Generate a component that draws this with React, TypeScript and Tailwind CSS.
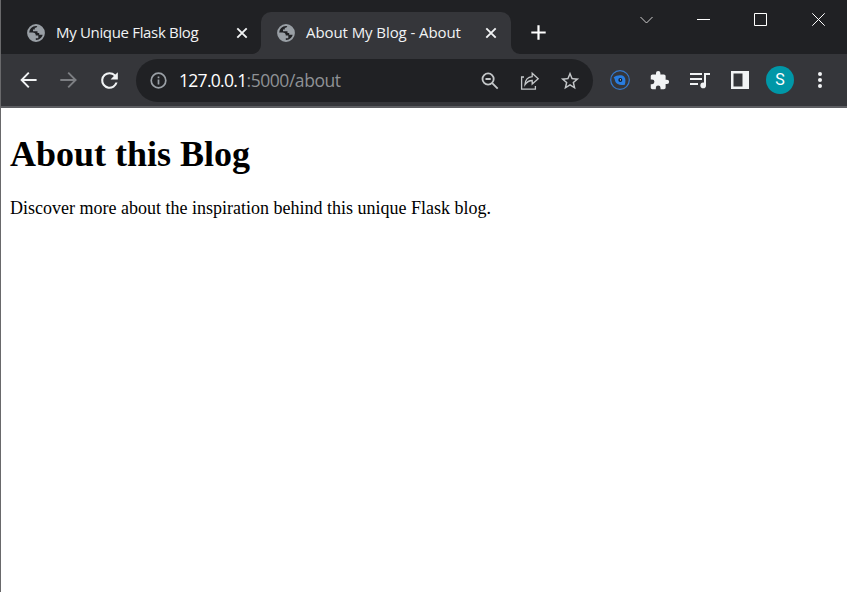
import type { ReactNode } from "react";

function Globe() {
  return (
    <svg width="18" height="18" viewBox="0 0 18 18" className="shrink-0">
      <circle cx="9" cy="9" r="7.9" fill="#202124" stroke="#9aa0a6" strokeWidth="2" />
      <path
        fill="#9aa0a6"
        d="M10.3 1.4C10.4 3 9.5 3.7 7.8 3.8V5.5H6V7.2H10.5V9H12.2V10.8H16.5A8 8 0 0 0 10.3 1.4ZM1.2 8.6H5.6C7.7 8.6 8.8 9.6 8.8 11.6H11.3V14.2H8.8V16.8A8 8 0 0 1 1.2 8.6Z"
      />
    </svg>
  );
}

function Cross() {
  return (
    <svg width="12" height="12" viewBox="0 0 12 12" className="shrink-0">
      <path d="M1.3 1.3l9.4 9.4M10.7 1.3l-9.4 9.4" stroke="#f1f3f4" strokeWidth="1.9" />
    </svg>
  );
}

function Cell({ children, className = "w-10" }: { children: ReactNode; className?: string }) {
  return <div className={"flex h-full shrink-0 items-center justify-center " + className}>{children}</div>;
}

function TabStrip() {
  return (
    <div className="flex h-[54px] items-end bg-[#202124] text-[15px] text-[#f1f3f4]">
      <div className="flex h-[42px] w-[251px] shrink-0 items-center pl-[26px] pr-[4px]">
        <Globe />
        <span className="ml-[11px] w-[180px] whitespace-nowrap pb-[2px] tracking-[-0.33px]">My Unique Flask Blog</span>
        <Cross />
      </div>
      <svg width="9" height="9" className="shrink-0">
        <path d="M0 9A9 9 0 0 0 9 0V9Z" fill="#35363a" />
      </svg>
      <div className="flex h-[42px] w-[250px] shrink-0 items-center rounded-t-[10px] bg-[#35363a] pl-[16px]">
        <Globe />
        <span className="ml-[11px] w-[179px] whitespace-nowrap pb-[2px] tracking-[-0.08px]">About My Blog - About</span>
        <Cross />
      </div>
      <svg width="9" height="9" className="shrink-0">
        <path d="M0 0A9 9 0 0 0 9 9H0Z" fill="#35363a" />
      </svg>
      <Cell className="w-9 pt-[11px]">
        <svg width="15" height="15" viewBox="0 0 15 15">
          <path d="M7.5 .3v14.4M.3 7.5h14.4" stroke="#fff" strokeWidth="2.2" />
        </svg>
      </Cell>
      <div className="ml-auto flex h-[39px] self-start">
        <Cell className="w-[57px] pr-px">
          <svg width="14" height="14" viewBox="0 0 14 14" fill="none" stroke="#d0d0d0">
            <path d="M.5 4l6 6 6-6" />
          </svg>
        </Cell>
        <Cell className="w-[57px] pr-[2px]">
          <svg width="13" height="13" viewBox="0 0 13 13" fill="none" stroke="#fff">
            <path d="M0 6.5h13" />
          </svg>
        </Cell>
        <Cell className="w-[57px] pr-[2px]">
          <svg width="13" height="13" viewBox="0 0 13 13" fill="none" stroke="#fff">
            <path d="M.5.5h12v12H.5z" />
          </svg>
        </Cell>
        <Cell className="w-[57px]">
          <svg width="13" height="13" viewBox="0 0 13 13" fill="none" stroke="#fff">
            <path d="M.3.3l12.4 12.4M12.7.3L.3 12.7" />
          </svg>
        </Cell>
      </div>
    </div>
  );
}

function AddressBar() {
  return (
    <div className="flex h-[43px] w-[457px] shrink-0 items-center rounded-full bg-[#202124] pl-[14px] pr-[3px]">
      <svg width="17" height="17" viewBox="0 0 17 17" fill="none" stroke="#9aa0a6" strokeWidth="1.7" className="shrink-0">
        <circle cx="8.5" cy="8.5" r="7.3" />
        <path d="M8.5 7.5v5M8.5 4.5v1.8" />
      </svg>
      <div className="ml-[12px] whitespace-nowrap pb-px text-[17.5px] leading-6 text-[#8f9195]">
        <span className="tracking-[-0.7px] text-white">127.0.0.1</span>
        <span className="tracking-[-0.45px]">:5000/about</span>
      </div>
      <div className="ml-auto flex h-full">
        <Cell>
          <svg width="18" height="18" viewBox="0 0 18 18" fill="none" stroke="#c4c7c9" strokeWidth="1.8">
            <circle cx="7.1" cy="7" r="5.6" />
            <path d="M11.2 11.1l5.5 5.5M4.5 7h5.2" />
          </svg>
        </Cell>
        <Cell>
          <svg width="20" height="20" viewBox="0 0 20 20" fill="none" stroke="#c4c7c9" strokeWidth="1.3">
            <path d="M4 6H1.6v12.2h13.8v-3.2" />
            <path d="M5 13.6C5.3 8.7 8 6.1 12.2 5.7V2.3l6 5.4-6 5.3V9.5C9 9.5 6.8 11 5 13.6Z" />
          </svg>
        </Cell>
        <Cell>
          <svg width="22" height="22" viewBox="0 0 24 24" fill="#c4c7c9">
            <path d="M22 9.24l-7.19-.62L12 2 9.19 8.63 2 9.24l5.46 4.73L5.82 21 12 17.27 18.18 21l-1.63-7.03L22 9.24zM12 15.4l-3.76 2.27 1-4.28-3.32-2.88 4.38-.38L12 6.1l1.71 4.04 4.38.38-3.32 2.88 1 4.28L12 15.4z" />
          </svg>
        </Cell>
      </div>
    </div>
  );
}

function Toolbar() {
  return (
    <div className="flex h-[52px] items-center bg-[#35363a] pl-[8px]">
      <Cell>
        <svg width="18" height="18" viewBox="0 0 18 18" fill="none" stroke="#f1f3f4" strokeWidth="1.9">
          <path d="M16.6 9H2M8.8 1.6L1.6 9l7.2 7.4" />
        </svg>
      </Cell>
      <Cell>
        <svg width="18" height="18" viewBox="0 0 18 18" fill="none" stroke="#7d7f83" strokeWidth="1.9">
          <path d="M.3 9H15.400M8.200 1.600L15.600 9l-7.400 7.400" />
        </svg>
      </Cell>
      <Cell>
        <svg width="25" height="25" viewBox="0 0 24 24" fill="#f1f3f4">
          <path d="M17.65 6.35A7.96 7.96 0 0 0 12 4a8 8 0 1 0 7.73 10h-2.08A6 6 0 1 1 12 6c1.66 0 3.14.69 4.22 1.78L13 11h7V4l-2.35 2.35z" />
        </svg>
      </Cell>
      <div className="ml-[7px] flex h-full items-center pt-px">
        <AddressBar />
      </div>
      <div className="ml-[7px] flex h-full items-center">
        <Cell>
          <svg width="20" height="20" viewBox="0 0 20 20">
            <circle cx="10" cy="10" r="9.3" fill="none" stroke="#3578ca" strokeWidth="1.2" />
            <path d="M3.6 7.6C6.5 4.8 12 4.4 14.2 6.7c1.7 1.8 1.4 5.5.6 8-4.4 1.2-8.5-.5-9.5-3.2C4.8 10.2 4.7 8.5 3.6 7.6Z" fill="#287de1" />
            <circle cx="10.3" cy="10" r="2" fill="#101e30" />
            <circle cx="10.4" cy="9.8" r=".6" fill="#fff" />
          </svg>
        </Cell>
        <Cell className="w-10 pr-[2px]">
          <svg width="21" height="21" viewBox="0 0 24 24" fill="#f1f3f4">
            <path d="M20.5 11H19V7c0-1.1-.9-2-2-2h-4V3.5a2.5 2.5 0 0 0-5 0V5H4c-1.1 0-1.99.9-1.99 2v3.8H3.5a2.7 2.7 0 0 1 0 5.4H2V20c0 1.1.9 2 2 2h3.8v-1.5a2.7 2.7 0 0 1 5.4 0V22H17c1.1 0 2-.9 2-2v-4h1.5a2.5 2.5 0 0 0 0-5z" />
          </svg>
        </Cell>
        <Cell>
          <svg width="20" height="18" viewBox="0 0 20 18" fill="none" stroke="#f1f3f4" strokeWidth="2">
            <path d="M0 3h12M0 8h12M0 13h8M15 14V3h5" />
            <circle cx="13.2" cy="14.4" r="2.8" fill="#f1f3f4" stroke="none" />
          </svg>
        </Cell>
        <Cell>
          <svg width="18" height="18" viewBox="0 0 18 18">
            <path fillRule="evenodd" d="M0 0h18v18H0zM2.500 2.500v13H11.500v-13z" fill="#f1f3f4" />
          </svg>
        </Cell>
        <Cell>
          <div className="flex size-7 items-center justify-center rounded-full bg-[#0097a7] font-[Roboto] text-[16px] text-white">S</div>
        </Cell>
        <Cell>
          <svg width="4" height="16" viewBox="0 0 4 16" fill="#f1f3f4">
            <circle cx="2" cy="2" r="2" />
            <circle cx="2" cy="8" r="2" />
            <circle cx="2" cy="14" r="2" />
          </svg>
        </Cell>
      </div>
    </div>
  );
}

export default function App() {
  return (
    <div className="flex h-screen flex-col overflow-hidden border-l border-[#69696b] bg-white font-['Open_Sans',sans-serif]">
      <TabStrip />
      <Toolbar />
      <div className="h-[2px] shrink-0 bg-[#5d5e62]" />
      <main className="pl-[9px] font-['Liberation_Serif',serif] text-black">
        <h1 className="mt-[26px] text-[36px] leading-[41px] font-bold">About this Blog</h1>
        <p className="mt-[23px] text-[18px] leading-[21px]">Discover more about the inspiration behind this unique Flask blog.</p>
      </main>
    </div>
  );
}
